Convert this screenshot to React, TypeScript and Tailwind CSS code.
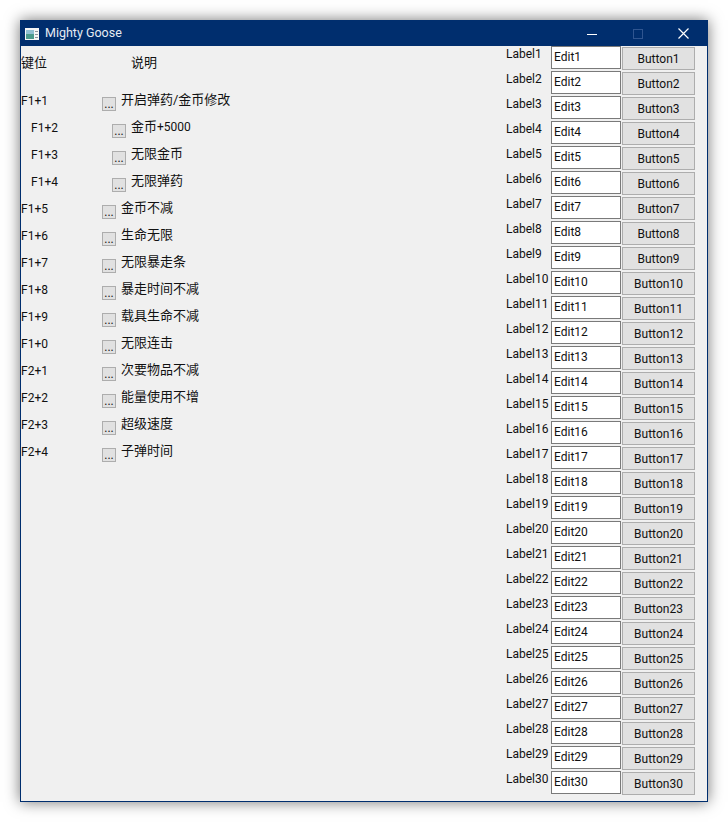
import React from 'react';

const FONT = "font-['Roboto','Noto_Sans_CJK_SC',sans-serif]";

type Cheat = { key: string; desc: React.ReactNode; nested?: boolean };

const cheats: Cheat[] = [
  { key: 'F1+1', desc: '开启弹药/金币修改' },
  { key: 'F1+2', desc: <>金币<span className="text-[12px]">+5000</span></>, nested: true },
  { key: 'F1+3', desc: '无限金币', nested: true },
  { key: 'F1+4', desc: '无限弹药', nested: true },
  { key: 'F1+5', desc: '金币不减' },
  { key: 'F1+6', desc: '生命无限' },
  { key: 'F1+7', desc: '无限暴走条' },
  { key: 'F1+8', desc: '暴走时间不减' },
  { key: 'F1+9', desc: '载具生命不减' },
  { key: 'F1+0', desc: '无限连击' },
  { key: 'F2+1', desc: '次要物品不减' },
  { key: 'F2+2', desc: '能量使用不增' },
  { key: 'F2+3', desc: '超级速度' },
  { key: 'F2+4', desc: '子弹时间' },
];

const rows = Array.from({ length: 30 }, (_, i) => i + 1);

const AppIcon = () => (
  <svg width="14" height="12" viewBox="0 0 14 12" className="shrink-0">
    <rect x="0" y="0" width="14" height="12" fill="#f4f6f6" />
    <rect x="1" y="2" width="8" height="9" fill="#4a9a8c" />
    <rect x="1" y="2" width="8" height="4" fill="#8fbfd2" />
    <rect x="10" y="3" width="3" height="1" fill="#8a949c" />
    <rect x="10" y="6" width="3" height="1" fill="#8a949c" />
    <rect x="10" y="9" width="3" height="1" fill="#8a949c" />
  </svg>
);

const TitleBar = () => (
  <div className="flex h-[25px] items-center bg-[#002e6e] pl-[4px] text-white">
    <AppIcon />
    <span className="ml-[6px] text-[12.5px] text-[#e6ebf3]">Mighty Goose</span>
    <div className="ml-auto flex items-center">
      <div className="flex w-[46px] justify-center">
        <svg width="10" height="10" viewBox="0 0 10 10">
          <path d="M0 5.5H10" stroke="#ffffff" />
        </svg>
      </div>
      <div className="flex w-[46px] justify-center">
        <svg width="10" height="10" viewBox="0 0 10 10">
          <rect x="0.5" y="0.5" width="9" height="9" fill="none" stroke="#2f5590" />
        </svg>
      </div>
      <div className="flex w-[46px] justify-center pr-[1px]">
        <svg width="11" height="11" viewBox="0 0 11 11">
          <path d="M0.5 0.5L10.5 10.5M10.5 0.5L0.5 10.5" stroke="#ffffff" strokeWidth="1.2" />
        </svg>
      </div>
    </div>
  </div>
);

const CheatRow = ({ cheat }: { cheat: Cheat }) => (
  <div className={`flex h-[27px] items-start ${cheat.nested ? 'pl-[10px]' : ''}`}>
    <span className="w-[81px] text-[12px] leading-[16px]">{cheat.key}</span>
    <button className="mt-[4px] flex h-[14px] w-[14px] items-end justify-center border border-[#adadad] bg-[#e1e1e1] text-[12px] leading-[12px]">
      ...
    </button>
    <span className="ml-[5px] text-[13px] leading-[14px]">{cheat.desc}</span>
  </div>
);

export default function App() {
  return (
    <div className={`min-h-[822px] bg-white pl-[20px] pt-[20px] ${FONT}`}>
      <div className="flex h-[782px] w-[688px] flex-col border border-[#002e6e] bg-[#f0f0f0] text-[#111111] shadow-[0_0_14px_rgba(0,0,0,0.55)]">
        <TitleBar />
        <div className="flex flex-1 justify-between pr-[12px]">
          <div>
            <div className="mt-[9px] flex h-[38px] items-start text-[13px] leading-[16px]">
              <span className="w-[110px]">键位</span>
              <span>说明</span>
            </div>
            {cheats.map((c) => (
              <CheatRow key={c.key} cheat={c} />
            ))}
          </div>
          <div className="flex flex-col">
            {rows.map((n) => (
              <div key={n} className="flex h-[25px] items-start">
                <span className="w-[45px] text-[12px] leading-[16px]">Label{n}</span>
                <div className="flex h-[23px] w-[70px] items-center border border-[#7a7a7a] bg-white pb-[1px] pl-[2px] text-[12px]">
                  Edit{n}
                </div>
                <button className="ml-[1px] mt-[1px] h-[23px] w-[73px] border border-[#adadad] bg-[#e1e1e1] text-[12px]">
                  Button{n}
                </button>
              </div>
            ))}
          </div>
        </div>
      </div>
    </div>
  );
}
